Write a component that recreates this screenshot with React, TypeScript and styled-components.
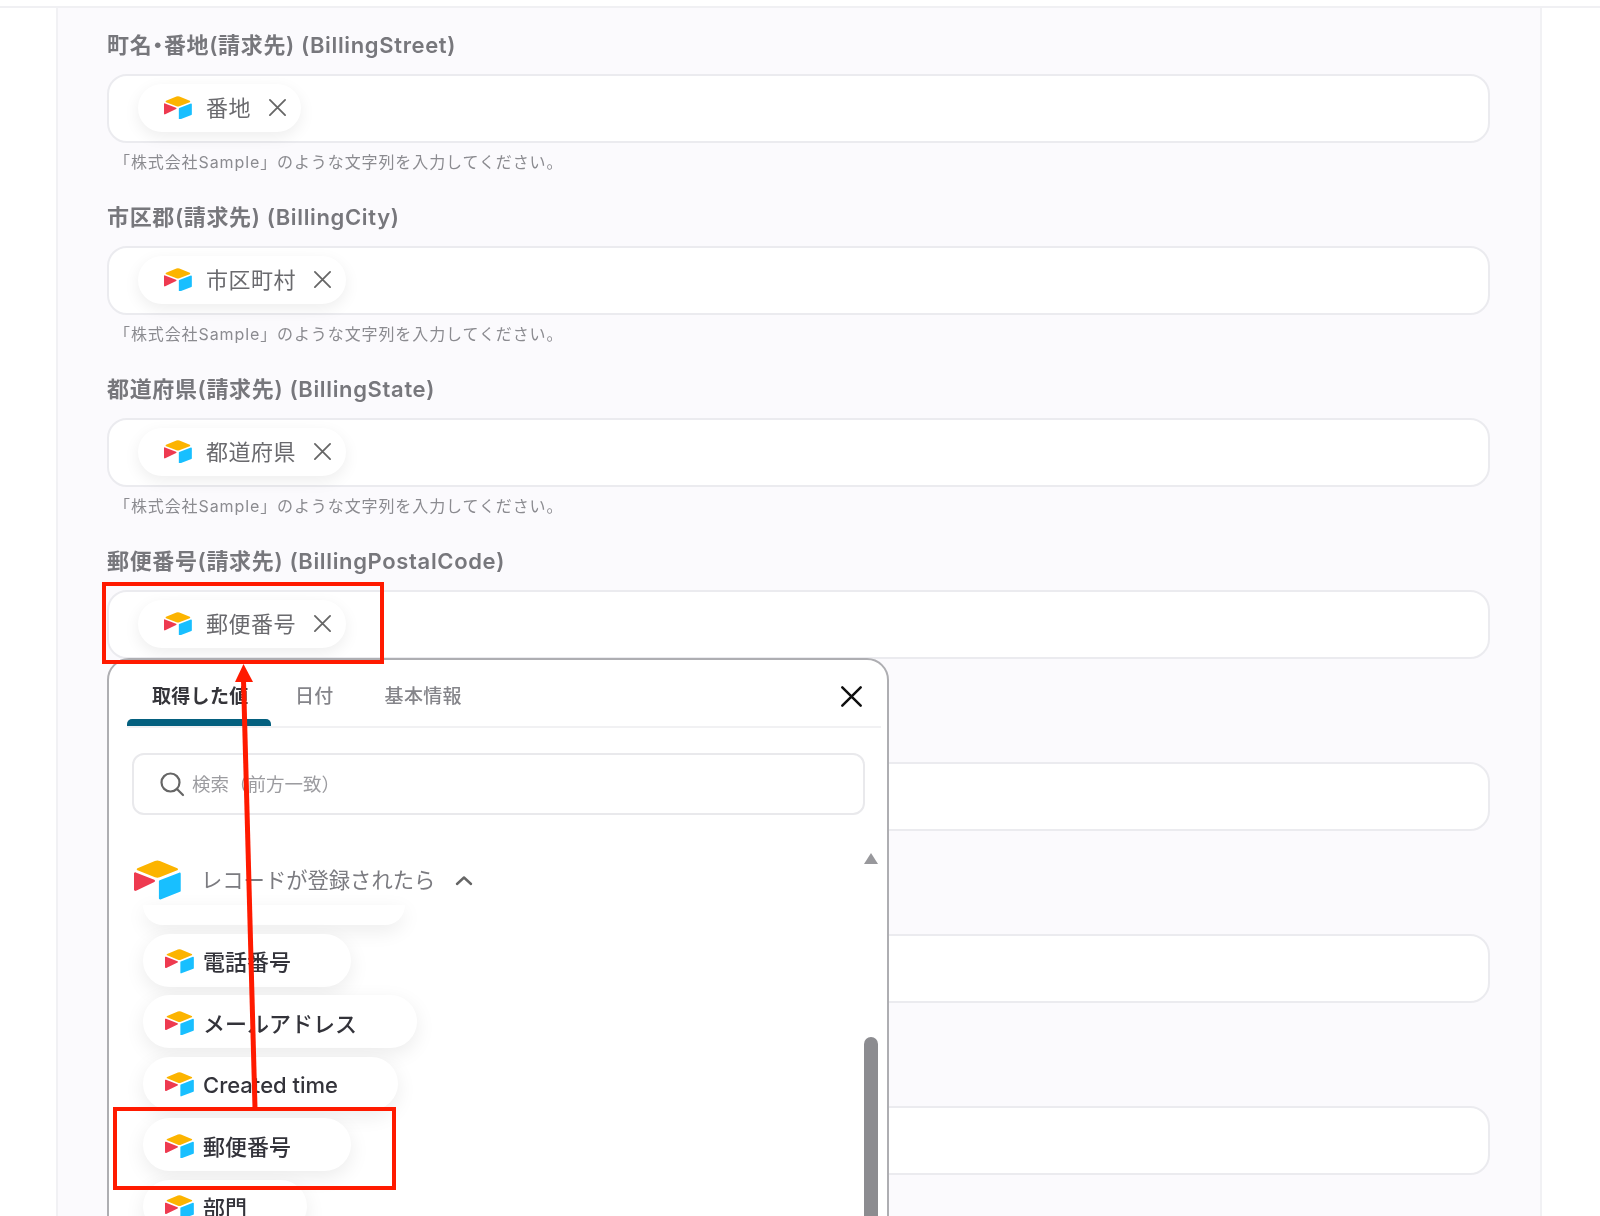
import React, { FC } from 'react';
import styled, { createGlobalStyle } from 'styled-components';

const FONT = `Inter, "Noto Sans CJK JP", "Noto Sans", sans-serif`;

const fields = [
  { label: '町名・番地(請求先) (BillingStreet)', chip: '番地', note: true },
  { label: '市区郡(請求先) (BillingCity)', chip: '市区町村', note: true },
  { label: '都道府県(請求先) (BillingState)', chip: '都道府県', note: true },
  { label: '郵便番号(請求先) (BillingPostalCode)', chip: '郵便番号', note: false },
  { label: '', chip: '', note: false },
  { label: '', chip: '', note: false },
  { label: '', chip: '', note: false },
];

const outputs = [
  { name: '電話番号', latin: false },
  { name: 'メールアドレス', latin: false },
  { name: 'Created time', latin: true },
  { name: '郵便番号', latin: false },
  { name: '部門', latin: false },
];

const AirtableLogo: FC<{ size: number }> = ({ size }) => (
  <svg width={size} height={size * 0.85} viewBox="11 9 178 151">
    <path
      fill="#FCB400"
      d="M90 12.4 24.1 39.7c-3.7 1.5-3.6 6.7.1 8.2l66.2 26.2a24.6 24.6 0 0 0 18.1 0l66.3-26.2c3.7-1.5 3.7-6.7.1-8.2l-66-27.3a24.6 24.6 0 0 0-18.9 0"
    />
    <path
      fill="#18BFFF"
      d="M105.3 88.5v65.6c0 3.1 3.1 5.2 6 4.1l73.9-28.7a4.4 4.4 0 0 0 2.8-4.1V60.8c0-3.1-3.1-5.2-6-4.1l-73.9 28.7a4.4 4.4 0 0 0-2.8 4.1"
    />
    <path
      fill="#EE3A50"
      d="M88.1 91.8 18.7 125.6c-2.9 1.4-7.7-.7-7.7-4V60.1c0-1.2.6-2.2 1.4-3a5 5 0 0 1 1.1-.8c1.1-.7 2.7-.8 4-.3l70.2 27.8c3.6 1.4 3.9 6.4.4 8"
    />
  </svg>
);

const CloseIcon: FC<{ size: number; weight: number; color: string }> = ({ size, weight, color }) => (
  <svg width={size} height={size} viewBox="0 0 20 20" fill="none" stroke={color} strokeWidth={weight} strokeLinecap="round">
    <path d="M2 2 18 18M18 2 2 18" />
  </svg>
);

const App: FC = () => {
  return (
    <Page>
      <GlobalStyle />
      <TopRule />
      <Panel>
        {fields.map((field, i) => (
          <Field key={i}>
            <Label>{field.label}</Label>
            <InputBox>
              {field.chip && (
                <ValueChip>
                  <AirtableLogo size={28} />
                  <span>{field.chip}</span>
                  <CloseIcon size={19} weight={1.9} color="#666" />
                </ValueChip>
              )}
            </InputBox>
            {field.note && <Note>「株式会社Sample」のような文字列を入力してください。</Note>}
          </Field>
        ))}
      </Panel>

      <Popup>
        <TabBar>
          <Tab $active>取得した値</Tab>
          <Tab>日付</Tab>
          <Tab>基本情報</Tab>
          <PopupClose>
            <CloseIcon size={23} weight={2.2} color="#111" />
          </PopupClose>
        </TabBar>
        <SearchBox>
          <svg width="26" height="26" viewBox="0 0 26 26" fill="none" stroke="#666" strokeWidth="2.2" strokeLinecap="round">
            <circle cx="11.5" cy="11.5" r="9" />
            <path d="M18 18 24 24" />
          </svg>
          <span>検索（前方一致）</span>
        </SearchBox>
        <GroupHeader>
          <AirtableLogo size={47} />
          <GroupTitle>レコードが登録されたら</GroupTitle>
          <svg width="18" height="11" viewBox="0 0 18 11" fill="none" stroke="#666" strokeWidth="2.4" strokeLinecap="round" strokeLinejoin="round">
            <path d="M2 9 9 2.5 16 9" />
          </svg>
        </GroupHeader>
        <OutputList>
          <HiddenChip />
          {outputs.map(({ name, latin }) => (
            <OutputChip key={name} $latin={latin}>
              <AirtableLogo size={29} />
              <span>{name}</span>
            </OutputChip>
          ))}
        </OutputList>
        <ScrollArrow />
        <ScrollThumb />
      </Popup>

      <RedBox $left={102} $top={582} $width={282} $height={82} />
      <RedBox $left={113} $top={1107} $width={283} $height={83} />
      <ArrowLayer viewBox="0 0 1600 1216">
        <path d="M255 1108 243.5 680" stroke="#ff1a00" strokeWidth="5" fill="none" />
        <path d="M243.5 664 253 682H235Z" fill="#ff1a00" />
      </ArrowLayer>
    </Page>
  );
};

const GlobalStyle = createGlobalStyle`
  html, body {
    margin: 0;
    padding: 0;
    background: #fff;
  }
`;

const Page = styled.div`
  position: relative;
  width: 1600px;
  height: 1216px;
  overflow: hidden;
  background: #fff;
  font-family: ${FONT};
  filter: blur(0.5px);
`;

const TopRule = styled.div`
  height: 6px;
  border-bottom: 2px solid #f0f0f3;
`;

const Panel = styled.div`
  box-sizing: border-box;
  width: 1486px;
  height: 1208px;
  margin-left: 56px;
  padding: 23px 49px 0;
  background: #fbfafd;
  border-left: 2px solid #f1f1f4;
  border-right: 2px solid #f1f1f4;
`;

const Field = styled.div`
  height: 172px;
`;

const Label = styled.div`
  height: 30px;
  margin-bottom: 13px;
  font-size: 22px;
  line-height: 29px;
  letter-spacing: 0.65px;
  font-weight: 600;
  font-feature-settings: 'palt';
  color: #77777c;
`;

const InputBox = styled.div`
  box-sizing: border-box;
  display: flex;
  align-items: center;
  width: 1383px;
  height: 69px;
  padding: 0 0 2px 29px;
  background: #fff;
  border: 2px solid #ebebef;
  border-radius: 20px;
`;

const ValueChip = styled.div`
  display: flex;
  align-items: center;
  height: 48px;
  padding: 0 14px 0 26px;
  border-radius: 24px;
  background: #fff;
  box-shadow: 0 5px 16px rgba(0, 0, 0, 0.07);
  font-size: 22px;
  letter-spacing: 0.5px;
  color: #6a6a6e;

  span {
    margin: -4px 17px 0 14px;
  }
`;

const Note = styled.div`
  margin: 6px 0 0 7px;
  font-size: 16px;
  line-height: 26px;
  letter-spacing: 0.9px;
  color: #8b8b90;
`;

const Popup = styled.div`
  position: absolute;
  left: 107px;
  top: 658px;
  box-sizing: border-box;
  width: 782px;
  height: 580px;
  overflow: hidden;
  background: #fff;
  border: 2px solid #aeaeb2;
  border-radius: 22px;
`;

const TabBar = styled.div`
  position: relative;
  display: flex;
  align-items: flex-start;
  height: 66px;
  margin: 0 6px 0 18px;
  border-bottom: 2px solid #f1f1f3;
`;

const Tab = styled.div<{ $active?: boolean }>`
  position: relative;
  box-sizing: border-box;
  height: 66px;
  width: ${({ $active }) => ($active ? '144px' : 'auto')};
  margin-right: ${({ $active }) => ($active ? '24px' : '51px')};
  padding-left: ${({ $active }) => ($active ? '25px' : '0')};
  font-size: 19px;
  line-height: 74px;
  letter-spacing: 0.3px;
  font-weight: ${({ $active }) => ($active ? 700 : 500)};
  color: ${({ $active }) => ($active ? '#35353a' : '#85858a')};

  &::after {
    content: '';
    display: ${({ $active }) => ($active ? 'block' : 'none')};
    position: absolute;
    left: 0;
    right: 0;
    bottom: 0;
    height: 7px;
    border-radius: 5px 5px 0 0;
    background: #04607f;
  }
`;

const PopupClose = styled.div`
  display: flex;
  margin: 25px 18px 0 auto;
`;

const SearchBox = styled.div`
  box-sizing: border-box;
  display: flex;
  align-items: center;
  width: 733px;
  height: 62px;
  margin: 25px 0 0 23px;
  padding-left: 25px;
  border: 2px solid #e9e9ec;
  border-radius: 12px;
  font-size: 18.5px;
  color: #9c9ca0;

  span {
    margin: -2px 0 0 7px;
  }
`;

const GroupHeader = styled.div`
  display: flex;
  align-items: center;
  margin: 45px 0 0 25px;
  height: 40px;
  color: #7b7b80;
`;

const GroupTitle = styled.div`
  margin: 0 20px 0 20px;
  font-size: 21.3px;
  line-height: 30px;
`;

const OutputList = styled.div`
  position: relative;
  display: flex;
  flex-direction: column;
  align-items: flex-start;
  gap: 8.5px;
  margin: 13px 0 0 34px;
`;

const OutputChip = styled.div<{ $latin?: boolean }>`
  display: flex;
  align-items: center;
  height: 53px;
  padding: 0 60px 0 22px;
  border-radius: 27px;
  background: #fff;
  box-shadow: 0 6px 20px rgba(0, 0, 0, 0.08);
  font-size: 22px;
  font-weight: 500;
  color: #33333a;

  svg {
    margin-top: 3px;
  }

  span {
    margin: ${({ $latin }) => ($latin ? '4px' : '0')} 0 0 9px;
  }
`;

const HiddenChip = styled(OutputChip)`
  width: 180px;
  height: 20px;
  margin-top: -8px;
  border-radius: 0 0 27px 27px;
`;

const ScrollArrow = styled.div`
  position: absolute;
  left: 755px;
  top: 193px;
  width: 0;
  height: 0;
  border-left: 7px solid transparent;
  border-right: 7px solid transparent;
  border-bottom: 11px solid #98989c;
`;

const ScrollThumb = styled.div`
  position: absolute;
  left: 755px;
  top: 377px;
  width: 14px;
  height: 240px;
  border-radius: 7px;
  background: #8c8c90;
`;

const RedBox = styled.div<{ $left: number; $top: number; $width: number; $height: number }>`
  position: absolute;
  box-sizing: border-box;
  left: ${({ $left }) => $left}px;
  top: ${({ $top }) => $top}px;
  width: ${({ $width }) => $width}px;
  height: ${({ $height }) => $height}px;
  border: 4px solid #ff1a00;
`;

const ArrowLayer = styled.svg`
  position: absolute;
  left: 0;
  top: 0;
  width: 1600px;
  height: 1216px;
  pointer-events: none;
`;

export default App;
